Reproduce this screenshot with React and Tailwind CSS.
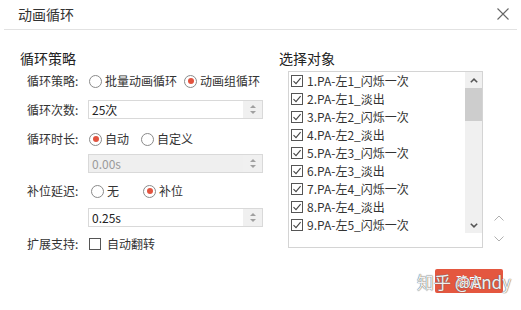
import React from "react";

const F = { fontFamily: '"Noto Sans CJK SC", "Noto Sans", sans-serif' };

function Radio({ checked }) {
  return (
    <span className="w-[13px] h-[13px] rounded-full border border-[#8a8a8a] bg-white flex items-center justify-center shrink-0">
      {checked && <span className="w-[6px] h-[6px] rounded-full bg-[#e2533f]" />}
    </span>
  );
}

function Check({ checked }) {
  return (
    <span className="w-[12px] h-[12px] border border-[#555] bg-white flex items-center justify-center shrink-0">
      {checked && (
        <svg width="10" height="10" viewBox="0 0 10 10">
          <path d="M1.5 5.2 L4 7.6 L8.6 2.2" fill="none" stroke="#444" strokeWidth="1.1" />
        </svg>
      )}
    </span>
  );
}

function Spin({ value, disabled }) {
  return (
    <div className={`w-[175px] h-[19px] border border-[#d9d9d9] flex shrink-0 ${disabled ? "bg-[#efefef]" : "bg-white"}`}>
      <div className={`flex-1 pl-[3px] text-[12px] leading-[17px] ${disabled ? "text-[#9a9a9a]" : "text-[#222]"}`}>{value}</div>
      <div className="w-[19px] bg-[#f0f0f0] flex flex-col items-center justify-center gap-[3px]">
        <svg width="6" height="3" viewBox="0 0 6 3"><path d="M0 3 L3 0 L6 3 Z" fill="#a0a0a0" /></svg>
        <svg width="6" height="3" viewBox="0 0 6 3"><path d="M0 0 L3 3 L6 0 Z" fill="#a0a0a0" /></svg>
      </div>
    </div>
  );
}

const items = [
  "1.PA-左1_闪烁一次",
  "2.PA-左1_淡出",
  "3.PA-左2_闪烁一次",
  "4.PA-左2_淡出",
  "5.PA-左3_闪烁一次",
  "6.PA-左3_淡出",
  "7.PA-左4_闪烁一次",
  "8.PA-左4_淡出",
  "9.PA-左5_闪烁一次",
];

export default function App() {
  return (
    <div className="w-[521px] h-[310px] bg-white relative overflow-hidden text-[#333]" style={F}>
      <div className="h-[30px] mx-[4px] border-b border-[#e2e2e2] flex items-center justify-between pl-[14px] pr-[8px] pb-[2px]">
        <span className="text-[14px] leading-[16px] text-[#333]">动画循环</span>
        <svg width="12" height="12" viewBox="0 0 12 12">
          <path d="M0.5 0.5 L11.5 11.5 M11.5 0.5 L0.5 11.5" stroke="#666" strokeWidth="1.1" />
        </svg>
      </div>

      <div className="flex">
        {/* left */}
        <div className="w-[279px] shrink-0 pl-[20px] pt-[20px] whitespace-nowrap">
          <div className="text-[14px] leading-[16px] text-[#222]">循环策略</div>

          <div className="flex items-center h-[18px] mt-[6px] text-[12px]">
            <span className="w-[68px] pl-[7px] shrink-0">循环策略:</span>
            <span className="flex items-center gap-[3px] ml-[1px]"><Radio /> <span>批量动画循环</span></span>
            <span className="flex items-center gap-[3px] ml-[7px]"><Radio checked /> <span>动画组循环</span></span>
          </div>

          <div className="flex items-center mt-[10px] text-[12px]">
            <span className="w-[68px] pl-[7px] shrink-0">循环次数:</span>
            <Spin value="25次" />
          </div>

          <div className="flex items-center h-[18px] mt-[11px] text-[12px]">
            <span className="w-[68px] pl-[7px] shrink-0">循环时长:</span>
            <span className="flex items-center gap-[3px] ml-[1px]"><Radio checked /> <span>自动</span></span>
            <span className="flex items-center gap-[3px] ml-[12px]"><Radio /> <span>自定义</span></span>
          </div>

          <div className="flex items-center mt-[6px] text-[12px]">
            <span className="w-[68px] shrink-0"></span>
            <Spin value="0.00s" disabled />
          </div>

          <div className="flex items-center h-[18px] mt-[9px] text-[12px]">
            <span className="w-[68px] pl-[7px] shrink-0">补位延迟:</span>
            <span className="flex items-center gap-[3px] ml-[3px]"><Radio /> <span>无</span></span>
            <span className="flex items-center gap-[3px] ml-[24px]"><Radio checked /> <span>补位</span></span>
          </div>

          <div className="flex items-center mt-[8px] text-[12px]">
            <span className="w-[68px] shrink-0"></span>
            <Spin value="0.25s" />
          </div>

          <div className="flex items-center h-[18px] mt-[8px] text-[12px]">
            <span className="w-[68px] pl-[7px] shrink-0">扩展支持:</span>
            <span className="flex items-center gap-[6px] ml-[1px]"><Check /> <span>自动翻转</span></span>
          </div>
        </div>

        {/* right */}
        <div className="pt-[20px] flex-1">
          <div className="text-[14px] leading-[16px] text-[#222]">选择对象</div>
          <div className="flex items-end">
            <div className="ml-[9px] mt-[5px] w-[195px] h-[177px] border border-[#d4d4d4] flex items-start shrink-0">
              <div className="flex-1 flex flex-col">
                {items.map((t) => (
                  <div key={t} className="h-[18px] flex items-center gap-[4px] pl-[2px] text-[12px] text-[#333]">
                    <Check checked />
                    <span className="whitespace-nowrap">{t}</span>
                  </div>
                ))}
              </div>
              <div className="w-[17px] h-[161px] bg-[#f0f0f0] flex flex-col">
                <div className="h-[16px] flex items-center justify-center">
                  <svg width="8" height="5" viewBox="0 0 8 5"><path d="M0.8 4.3 L4 1.1 L7.2 4.3" fill="none" stroke="#555" strokeWidth="1.5" /></svg>
                </div>
                <div className="h-[33px] bg-[#cdcdcd]"></div>
                <div className="flex-1"></div>
                <div className="h-[16px] flex items-center justify-center">
                  <svg width="8" height="5" viewBox="0 0 8 5"><path d="M0.8 0.7 L4 3.9 L7.2 0.7" fill="none" stroke="#555" strokeWidth="1.5" /></svg>
                </div>
              </div>
            </div>
            <div className="ml-[11px] mb-[6px] flex flex-col gap-[15px]">
              <svg width="10" height="6" viewBox="0 0 10 6"><path d="M0.5 5.5 L5 1 L9.5 5.5" fill="none" stroke="#b0b0b0" strokeWidth="1" /></svg>
              <svg width="10" height="6" viewBox="0 0 10 6"><path d="M0.5 0.5 L5 5 L9.5 0.5" fill="none" stroke="#b0b0b0" strokeWidth="1" /></svg>
            </div>
          </div>
          <div className="flex justify-end mt-[21px] pr-[18px]">
            <button className="w-[68px] h-[24px] bg-[#e4573f] text-white text-[13px] leading-[24px] rounded-[2px]">确定</button>
          </div>
        </div>
      </div>

      <div
        className="absolute left-[417px] top-[271px] text-[17px] leading-[22px] whitespace-nowrap text-[rgba(255,255,255,0.92)]"
        style={{ textShadow: "0 0 1px #666, 0 0 1px #666" }}
      >
        知乎 @Andy
      </div>
    </div>
  );
}
